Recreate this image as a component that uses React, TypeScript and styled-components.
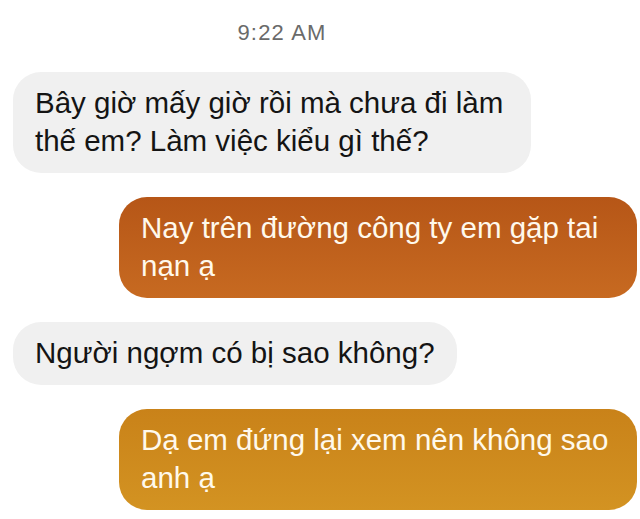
import React from 'react'
import styled, { createGlobalStyle } from 'styled-components'

const GlobalStyle = createGlobalStyle`
    html, body {
        margin: 0;
        padding: 0;
        background: #ffffff;
    }
    body {
        font-family: "Liberation Sans", Arial, sans-serif;
        -webkit-font-smoothing: antialiased;
    }
`

interface Message {
    id: number
    text: string
    mine: boolean
}

const messages: Message[] = [
    { id: 1, text: "Bây giờ mấy giờ rồi mà chưa đi làm thế em? Làm việc kiểu gì thế?", mine: false },
    { id: 2, text: "Nay trên đường công ty em gặp tai nạn ạ", mine: true },
    { id: 3, text: "Người ngợm có bị sao không?", mine: false },
    { id: 4, text: "Dạ em đứng lại xem nên không sao anh ạ", mine: true },
]

// the sent bubbles pick up the colour of the gradient behind them, so each one gets its own pair
const sentColors: Record<number, [string, string]> = {
    2: ["#b65617", "#c76a21"],
    4: ["#c98219", "#d39322"],
}

const Screen = styled.div`
    width: 640px;
    height: 519px;
    overflow: hidden;
    box-sizing: border-box;
    padding: 21px 3px 0 13px;
    display: flex;
    flex-direction: column;
`

const Timestamp = styled.div`
    padding-right: 86px;
    text-align: center;
    font-size: 22px;
    line-height: 24px;
    letter-spacing: 1.2px;
    color: #6a6a6a;
    margin-bottom: 27px;
`

const Thread = styled.div`
    display: flex;
    flex-direction: column;
    gap: 24px;
`

const Bubble = styled.div<{ $mine: boolean; $from?: string; $to?: string }>`
    align-self: ${p => (p.$mine ? 'flex-end' : 'flex-start')};
    max-width: 518px;
    box-sizing: border-box;
    padding: 12px 22px 13px 22px;
    border-radius: 28px;
    font-size: 29.5px;
    line-height: 38px;
    color: ${p => (p.$mine ? '#fff9ec' : '#141414')};
    background: ${p => (p.$mine ? `linear-gradient(180deg, ${p.$from}, ${p.$to})` : '#f0f0f0')};
`

export default function App() {
    return (
        <>
            <GlobalStyle />
            <Screen>
                <Timestamp>9:22 AM</Timestamp>
                <Thread>
                    {messages.map(m => (
                        <Bubble
                            key={m.id}
                            $mine={m.mine}
                            $from={sentColors[m.id]?.[0]}
                            $to={sentColors[m.id]?.[1]}
                        >
                            {m.text}
                        </Bubble>
                    ))}
                </Thread>
            </Screen>
        </>
    )
}
